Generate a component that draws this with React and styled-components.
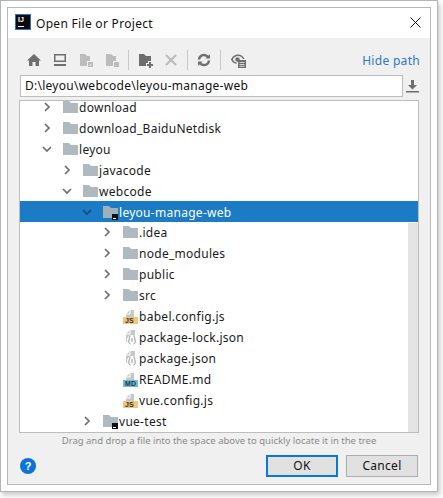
import React from 'react';
import styled, { createGlobalStyle } from 'styled-components';

const Global = createGlobalStyle`
  html, body {
    margin: 0;
    padding: 0;
    background: #fff;
  }
  body {
    font-family: "Noto Sans", "Noto Sans CJK SC", sans-serif;
  }
`;

const Page = styled.div`
  width: 443px;
  height: 498px;
  overflow: hidden;
`;
const Outer = styled.div`
  width: 438px;
  height: 492px;
  box-sizing: border-box;
  border: 1px solid #b4b4b4;
  padding: 6px;
  background: #fff;
  box-shadow: 2px 3px 5px rgba(0, 0, 0, 0.22);
`;
const Win = styled.div`
  height: 100%;
  box-sizing: border-box;
  border: 1px solid #b9b9b9;
  display: flex;
  flex-direction: column;
  background: #f0f0f0;
`;
const TitleBar = styled.div`
  height: 30px;
  flex: none;
  box-sizing: border-box;
  background: #fff;
  display: flex;
  align-items: center;
  padding: 0 9px 2px 7px;
  gap: 5px;
`;
const Logo = styled.div`
  width: 16px;
  height: 16px;
  background: #0a0a0f;
  box-shadow: inset 0 0 0 1px #2a6fc0;
  color: #fff;
  font: bold 7px/8px "Liberation Sans", sans-serif;
  padding: 2px 0 0 3px;
  box-sizing: border-box;
  position: relative;
  &::after {
    content: '';
    position: absolute;
    left: 3px;
    bottom: 3px;
    width: 6px;
    height: 1px;
    background: #fff;
  }
`;
const Title = styled.div`
  flex: 1;
  font-size: 12px;
  color: #111;
  letter-spacing: 0.3px;
  padding-top: 2px;
`;
const Toolbar = styled.div`
  height: 37px;
  flex: none;
  box-sizing: border-box;
  display: flex;
  align-items: center;
  padding: 7px 10px 0 18px;
`;
const Tool = styled.svg`
  width: 16px;
  height: 16px;
  flex: none;
  margin-right: ${(p) => p.$gap ?? 10}px;
`;
const Sep = styled.div`
  width: 1px;
  height: 20px;
  background: #c8c8c8;
  margin-right: ${(p) => p.$gap ?? 8}px;
`;
const HidePath = styled.div`
  margin-left: auto;
  font-size: 12px;
  color: #2b78c8;
  letter-spacing: 0.3px;
`;
const PathRow = styled.div`
  display: flex;
  align-items: center;
  padding: 0 11px 0 12px;
  height: 22px;
  flex: none;
`;
const PathInput = styled.div`
  width: 383px;
  height: 22px;
  box-sizing: border-box;
  border: 1px solid #bdbdbd;
  background: #fff;
  font-size: 12px;
  line-height: 20px;
  color: #111;
  padding-left: 4px;
  letter-spacing: 0.26px;
  white-space: nowrap;
`;
const DownloadIcon = styled.svg`
  width: 13px;
  height: 13px;
  flex: none;
  margin-left: 3px;
`;
const Tree = styled.div`
  margin: 3px 0 0 11px;
  width: 400px;
  height: 333px;
  flex: none;
  box-sizing: border-box;
  border: 1px solid #bdbdbd;
  background: #fff;
  position: relative;
  overflow: hidden;
`;
const Rows = styled.div`
  margin-top: -4.5px;
`;
const Scroll = styled.div`
  position: absolute;
  right: 0;
  top: 122px;
  bottom: 0;
  width: 10px;
  background: #e4e4e4;
`;
const Row = styled.div`
  height: 20.93px;
  display: flex;
  align-items: center;
  padding-left: ${(p) => p.$indent}px;
  background: ${(p) => (p.$sel ? '#1b7bc4' : 'transparent')};
  color: ${(p) => (p.$sel ? '#fff' : '#1a1a1a')};
  font-size: 12px;
  letter-spacing: 0.28px;
  white-space: nowrap;
`;
const Label = styled.span`
  line-height: 13px;
  padding-top: 1px;
`;
const Arrow = styled.svg`
  width: 10px;
  height: 10px;
  flex: none;
  margin-right: 10px;
`;
const Spacer = styled.div`
  width: 20px;
  flex: none;
`;
const IconBox = styled.div`
  width: 16px;
  height: 16px;
  margin-left: 1px;
  flex: none;
  position: relative;
`;
const Folder = styled.svg`
  width: 15px;
  height: 12px;
  position: absolute;
  left: 0;
  top: 2px;
`;
const ModuleBadge = styled.span`
  position: absolute;
  left: 9px;
  top: 10px;
  width: 6px;
  height: 6px;
  background: #111;
  &::after {
    content: '';
    position: absolute;
    left: 1px;
    bottom: 1px;
    width: 3px;
    height: 1px;
    background: #fff;
  }
`;
const FileSvg = styled.svg`
  width: 16px;
  height: 16px;
  position: absolute;
  left: 0;
  top: 0;
`;
const FileTag = styled.span`
  position: absolute;
  left: 0;
  bottom: 0;
  width: 15px;
  height: 7px;
  background: ${(p) => p.$bg};
  color: #333;
  font: bold 7px/7px "Liberation Sans", sans-serif;
  letter-spacing: 0.2px;
  padding-left: 2px;
  box-sizing: border-box;
`;
const Hint = styled.div`
  height: 15px;
  flex: none;
  text-align: center;
  font-size: 9.5px;
  line-height: 15px;
  color: #8a8a8a;
  letter-spacing: 0;
`;
const Footer = styled.div`
  flex: 1;
  display: flex;
  align-items: center;
  padding: 0 12px;
  gap: 8px;
`;
const Help = styled.div`
  width: 16px;
  height: 16px;
  border-radius: 50%;
  background: #0c74d6;
  color: #fff;
  font: bold 11px/16px "Liberation Sans", sans-serif;
  text-align: center;
  margin-right: auto;
`;
const Button = styled.div`
  width: 72px;
  height: 22px;
  box-sizing: border-box;
  border: ${(p) => (p.$primary ? '2px solid #0a78d7' : '1px solid #adadad')};
  background: #e1e1e1;
  color: #111;
  font-size: 12px;
  line-height: ${(p) => (p.$primary ? 18 : 20)}px;
  text-align: center;
  letter-spacing: 0.3px;
`;

const Chevron = ({ dir, sel }) => (
  <Arrow viewBox="0 0 10 10">
    <path
      d={dir === 'down' ? 'M1 3l4 4 4-4' : 'M3 1l4 4-4 4'}
      fill="none"
      stroke={sel ? '#134a74' : '#6e6e6e'}
      strokeWidth="1.7"
    />
  </Arrow>
);

const FolderIcon = ({ module, sel }) => (
  <IconBox>
    <Folder viewBox="0 0 15 12">
      <path d="M0 0h6l2 2h7v10H0z" fill={sel ? '#9fb0bd' : '#aeb9c0'} />
    </Folder>
    {module && <ModuleBadge />}
  </IconBox>
);

const FileIcon = ({ tag, bg }) => (
  <IconBox>
    <FileSvg viewBox="0 0 16 16">
      <path d="M3 9V6l4-4h4v7z" fill="#c4c8cb" />
      <path d="M7 2v4H3" fill="none" stroke="#fff" strokeWidth="1" />
    </FileSvg>
    <FileTag $bg={bg}>{tag}</FileTag>
  </IconBox>
);

const JsonIcon = () => (
  <IconBox>
    <FileSvg viewBox="0 0 16 16">
      <path d="M3 13V5l4-4h5v8H9v4z" fill="#c4c8cb" />
      <path d="M7 1v4H3" fill="none" stroke="#fff" strokeWidth="1" />
      <circle cx="9" cy="11" r="5" fill="#fff" />
      <path
        d="M7.500 7c-1.500 0-1 2.500-1.500 4s-.5 3.500 1.500 4M10.500 7c1.500 0 1 2.500 1.500 4s.5 3.500-1.500 4"
        fill="none"
        stroke="#8c9499"
        strokeWidth="1"
      />
      <path d="M9 9v4" stroke="#8c9499" strokeWidth="1" />
    </FileSvg>
  </IconBox>
);

const entries = [
  { indent: 22, dir: 'right', name: 'download' },
  { indent: 22, dir: 'right', name: 'download_BaiduNetdisk' },
  { indent: 22, dir: 'down', name: 'leyou' },
  { indent: 42, dir: 'right', name: 'javacode' },
  { indent: 42, dir: 'down', name: 'webcode' },
  { indent: 62, dir: 'down', name: 'leyou-manage-web', module: true, sel: true },
  { indent: 82, dir: 'right', name: '.idea' },
  { indent: 82, dir: 'right', name: 'node_modules' },
  { indent: 82, dir: 'right', name: 'public' },
  { indent: 82, dir: 'right', name: 'src' },
  { indent: 82, file: 'JS', bg: '#f2c47c', name: 'babel.config.js' },
  { indent: 82, json: true, name: 'package-lock.json' },
  { indent: 82, json: true, name: 'package.json' },
  { indent: 82, file: 'MD', bg: '#63bfe4', name: 'README.md' },
  { indent: 82, file: 'JS', bg: '#f2c47c', name: 'vue.config.js' },
  { indent: 62, dir: 'right', name: 'vue-test', module: true },
];

const TreeRow = ({ e }) => {
  let icon = <FolderIcon module={e.module} sel={e.sel} />;
  if (e.file) icon = <FileIcon tag={e.file} bg={e.bg} />;
  if (e.json) icon = <JsonIcon />;
  return (
    <Row $indent={e.indent} $sel={e.sel}>
      {e.dir ? <Chevron dir={e.dir} sel={e.sel} /> : <Spacer />}
      {icon}
      <Label>{e.name}</Label>
    </Row>
  );
};

const App = () => (
  <Page>
    <Global />
    <Outer>
      <Win>
        <TitleBar>
          <Logo>IJ</Logo>
          <Title>Open File or Project</Title>
          <svg width="11" height="11" viewBox="0 0 11 11">
            <path d="M.5.5l10 10M10.500.5l-10 10" stroke="#111" strokeWidth="1" />
          </svg>
        </TitleBar>
        <Toolbar>
          <Tool viewBox="0 0 16 16">
            <path d="M8 2L1 8.500h2V14h3.500v-4h3v4H13V8.500h2z" fill="#6e6e6e" />
          </Tool>
          <Tool viewBox="0 0 16 16">
            <path d="M2 2h12v8H2zM3.500 3.500v5h9v-5z" fill="#6e6e6e" fillRule="evenodd" />
            <path d="M2 12h12v2H2z" fill="#6e6e6e" />
          </Tool>
          <Tool viewBox="0 0 16 16">
            <path d="M2 2h5l2 2h3v5H9v5H2z" fill="#bcbcbc" />
            <path d="M10 10h5v5h-5zM11.500 12.500v1h2v-1z" fill="#bcbcbc" fillRule="evenodd" />
          </Tool>
          <Tool viewBox="0 0 16 16" $gap={8}>
            <path d="M2 2h5l2 2h3v5H9v5H2z" fill="#bcbcbc" />
            <path d="M10 10h5v5h-5z" fill="#bcbcbc" />
          </Tool>
          <Sep $gap={9} />
          <Tool viewBox="0 0 16 16" $gap={9}>
            <path d="M1 2h5l2 2h5v5h-3v2H8v3H1z" fill="#6e6e6e" />
            <path d="M11 10h2v2h2v2h-2v2h-2v-2H9v-2h2z" fill="#6e6e6e" />
          </Tool>
          <Tool viewBox="0 0 16 16" $gap={8}>
            <path d="M3 3l10 10M13 3L3 13" stroke="#bcbcbc" strokeWidth="2.200" />
          </Tool>
          <Sep $gap={8} />
          <Tool viewBox="0 0 16 16" $gap={8}>
            <path
              d="M3 7.500A5 5 0 0 1 12 5M13 8.500A5 5 0 0 1 4 11"
              fill="none"
              stroke="#6e6e6e"
              strokeWidth="2.400"
            />
            <path d="M9.500 6.500H14V2zM6.500 9.500H2V14z" fill="#6e6e6e" />
          </Tool>
          <Sep $gap={9} />
          <Tool viewBox="0 0 16 16" $gap={0}>
            <path
              d="M8 2.500C4.500 2.500 2 5 1 7.500 1.800 9.500 3.500 11.500 6.500 12V10.500C4.800 10 3.500 9 2.800 7.500 3.800 5.500 5.700 4 8 4s4 1.200 5 3h1.500C13.500 4.500 11 2.500 8 2.500z"
              fill="#6e6e6e"
            />
            <circle cx="7.500" cy="7.500" r="2.200" fill="#6e6e6e" />
            <path d="M8 8h8v8H8z" fill="#6e6e6e" />
            <path d="M9.500 10.500h5M9.500 12.500h5M9.500 14.300h5" stroke="#f0f0f0" strokeWidth="0.800" />
          </Tool>
          <HidePath>Hide path</HidePath>
        </Toolbar>
        <PathRow>
          <PathInput>D:\leyou\webcode\leyou-manage-web</PathInput>
          <DownloadIcon viewBox="0 0 13 13">
            <path d="M5 0h3v5h3L6.500 9.500 2 5h3zM0 11h13v1.500H0z" fill="#6e6e6e" />
          </DownloadIcon>
        </PathRow>
        <Tree>
          <Rows>
            {entries.map((e) => (
              <TreeRow key={e.name} e={e} />
            ))}
          </Rows>
          <Scroll />
        </Tree>
        <Hint>Drag and drop a file into the space above to quickly locate it in the tree</Hint>
        <Footer>
          <Help>?</Help>
          <Button $primary>OK</Button>
          <Button>Cancel</Button>
        </Footer>
      </Win>
    </Outer>
  </Page>
);

export default App;
